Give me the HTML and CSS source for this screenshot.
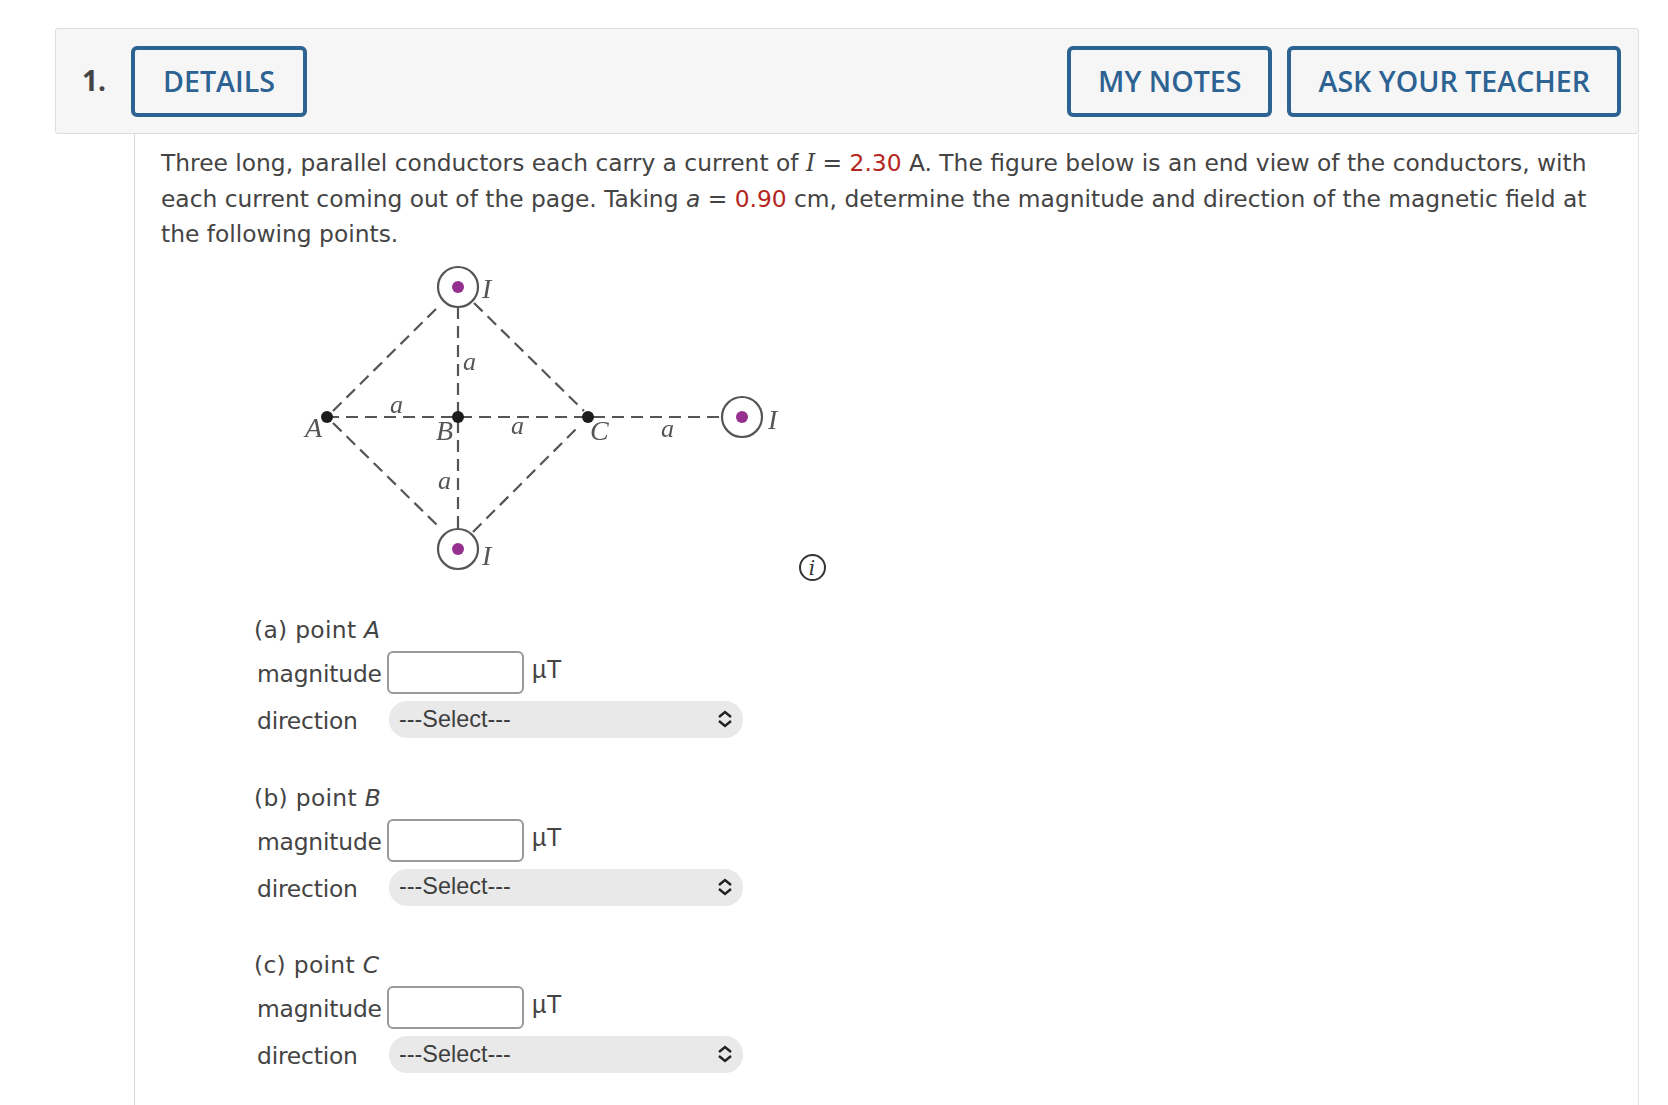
FILE: index.html
```html
<!DOCTYPE html>
<html lang="en">
<head>
  <meta charset="UTF-8">
  <meta name="viewport" content="width=device-width, initial-scale=1.0">
  <title>Question 1</title>
  <link rel="stylesheet" href="styles.css">
</head>
<body>
  <div class="question-head">
    <span class="question-num">1.</span>
    <button class="head-btn">DETAILS</button>
    <div class="head-right">
      <button class="head-btn">MY NOTES</button>
      <button class="head-btn">ASK YOUR TEACHER</button>
    </div>
  </div>

  <div class="question-body">
    <p class="prompt">Three long, parallel conductors each carry a current of <i class="var">I</i> = <span class="given">2.30</span> A. The figure below is an end view of the conductors, with each current coming out of the page. Taking <i>a</i> = <span class="given">0.90</span> cm, determine the magnitude and direction of the magnetic field at the following points.</p>

    <!-- figure: coordinates are page pixels from the figure's top left corner -->
    <svg class="figure" width="680" height="359" viewBox="0 0 680 359">
      <g class="scan">
        <g class="dash">
          <line x1="173" y1="158" x2="280" y2="52"></line>
          <line x1="314" y1="50" x2="424" y2="158"></line>
          <line x1="173" y1="170" x2="280" y2="275"></line>
          <line x1="313" y1="279" x2="420" y2="172"></line>
          <line x1="167" y1="164" x2="562" y2="164"></line>
          <line x1="298" y1="54" x2="298" y2="276"></line>
        </g>
        <g class="wire">
          <circle cx="298" cy="34" r="20"></circle>
          <circle cx="298" cy="296" r="20"></circle>
          <circle cx="582" cy="164" r="20"></circle>
        </g>
        <g class="core">
          <circle cx="298" cy="34" r="6"></circle>
          <circle cx="298" cy="296" r="6"></circle>
          <circle cx="582" cy="164" r="6"></circle>
        </g>
        <g class="node">
          <circle cx="167" cy="164" r="6"></circle>
          <circle cx="298" cy="164" r="6"></circle>
          <circle cx="428" cy="164" r="6"></circle>
        </g>
        <g class="fig-text">
          <text x="322" y="45">I</text>
          <text x="322" y="312">I</text>
          <text x="608" y="176">I</text>
          <text x="145" y="184">A</text>
          <text x="276" y="187">B</text>
          <text x="430" y="187">C</text>
          <text class="len" x="303" y="117">a</text>
          <text class="len" x="230" y="160">a</text>
          <text class="len" x="351" y="181">a</text>
          <text class="len" x="278" y="236">a</text>
          <text class="len" x="501" y="184">a</text>
        </g>
      </g>
      <circle class="info-ring" cx="652.5" cy="314.5" r="12.5"></circle>
      <text class="info-i" x="652" y="322">i</text>
    </svg>

    <div class="part">
      <div class="part-title">(a) point <i>A</i></div>
      <div class="row row-mag">
        <label class="row-label">magnitude</label>
        <input class="num-input" type="text">
        <span class="unit">µT</span>
      </div>
      <div class="row row-dir">
        <label class="row-label">direction</label>
        <div class="select-wrap">
          <select class="dir-select"><option>---Select---</option></select>
          <svg class="chevrons" width="16" height="18" viewBox="0 0 16 18"><path d="M2 7 L8 2 L14 7 M2 11 L8 16 L14 11"></path></svg>
        </div>
      </div>
    </div>

    <div class="part">
      <div class="part-title">(b) point <i>B</i></div>
      <div class="row row-mag">
        <label class="row-label">magnitude</label>
        <input class="num-input" type="text">
        <span class="unit">µT</span>
      </div>
      <div class="row row-dir">
        <label class="row-label">direction</label>
        <div class="select-wrap">
          <select class="dir-select"><option>---Select---</option></select>
          <svg class="chevrons" width="16" height="18" viewBox="0 0 16 18"><path d="M2 7 L8 2 L14 7 M2 11 L8 16 L14 11"></path></svg>
        </div>
      </div>
    </div>

    <div class="part">
      <div class="part-title">(c) point <i>C</i></div>
      <div class="row row-mag">
        <label class="row-label">magnitude</label>
        <input class="num-input" type="text">
        <span class="unit">µT</span>
      </div>
      <div class="row row-dir">
        <label class="row-label">direction</label>
        <div class="select-wrap">
          <select class="dir-select"><option>---Select---</option></select>
          <svg class="chevrons" width="16" height="18" viewBox="0 0 16 18"><path d="M2 7 L8 2 L14 7 M2 11 L8 16 L14 11"></path></svg>
        </div>
      </div>
    </div>
  </div>
</body>
</html>
```

FILE: styles.css
```css
body {
  margin: 0;
  height: 1105px;
  overflow: hidden;
  padding: 28px 29px 0 55px;
  box-sizing: border-box;
  background: #fff;
  color: #444;
  font-family: "DejaVu Sans", sans-serif;
}

.question-head {
  display: flex;
  align-items: center;
  gap: 24px;
  height: 106px;
  box-sizing: border-box;
  padding: 0 17px 0 26px;
  background: #f6f6f6;
  border: 1px solid #dedede;
  border-radius: 3px;
}

.question-num {
  width: 25px;
  margin-top: -2px;
  font-family: "Open Sans", sans-serif;
  font-size: 28px;
  font-weight: 700;
}

.head-right {
  margin-left: auto;
  display: flex;
  gap: 15px;
}

.head-btn {
  height: 71px;
  padding: 0 28px 2px;
  background: transparent;
  border: 4px solid #2d6393;
  border-radius: 6px;
  color: #2d6393;
  font-family: "Open Sans", sans-serif;
  font-size: 28.6px;
  font-weight: 600;
}

.head-right .head-btn {
  padding: 0 27px 2px;
}

.question-body {
  margin-left: 79px;
  padding: 12px 24px 0 26px;
  border-left: 1px solid #d9d9d9;
  border-right: 1px solid #e4e4e4;
  height: 980px;
}

.prompt {
  margin: 0;
  font-size: 23.35px;
  line-height: 35.7px;
}

.given {
  color: #b5271e;
}

.var {
  font-family: "DejaVu Serif", serif;
}

.figure {
  display: block;
  margin-left: -1px;
  overflow: visible;
}

.scan {
  filter: blur(0.4px);
}

.dash line {
  stroke: #555;
  stroke-width: 2.2;
  stroke-dasharray: 12 7;
}

.wire circle {
  fill: #fff;
  stroke: #555;
  stroke-width: 2.2;
}

.core circle {
  fill: #96308f;
}

.node circle {
  fill: #1c1c1c;
}

.fig-text text {
  font-family: "Liberation Serif", serif;
  font-style: italic;
  font-size: 28px;
  fill: #555;
}

.fig-text .len {
  font-size: 26px;
}

.info-ring {
  fill: #fff;
  stroke: #333;
  stroke-width: 2;
}

.info-i {
  font-family: "DejaVu Serif", serif;
  font-style: italic;
  font-size: 20px;
  text-anchor: middle;
  fill: #333;
}

.part {
  margin: 0 0 41.5px 93px;
  font-size: 23.4px;
}

.part-title {
  line-height: 36px;
  letter-spacing: 0.3px;
}

.row {
  display: flex;
  align-items: center;
  padding-left: 3px;
}

.row-mag {
  margin-top: 3px;
  height: 43px;
}

.row-dir {
  margin-top: 7px;
  height: 37px;
}

.row-label {
  width: 130px;
  padding-top: 3px;
  letter-spacing: -0.2px;
}

.num-input {
  width: 137px;
  height: 43px;
  box-sizing: border-box;
  background: #fff;
  border: 2px solid #999;
  border-radius: 6px;
}

.unit {
  margin: -6px 0 0 8px;
  font-family: "Liberation Sans", sans-serif;
  font-size: 25px;
}

.select-wrap {
  position: relative;
  margin-left: 2px;
}

.dir-select {
  display: block;
  width: 354px;
  height: 37px;
  padding: 0 0 2px 10px;
  appearance: none;
  background: #e9e9e9;
  border: none;
  border-radius: 18px;
  color: #3d3d3d;
  font-family: "Liberation Sans", sans-serif;
  font-size: 23.4px;
}

.chevrons {
  position: absolute;
  top: 9px;
  right: 10px;
}

.chevrons path {
  fill: none;
  stroke: #222;
  stroke-width: 2.4;
}
```
